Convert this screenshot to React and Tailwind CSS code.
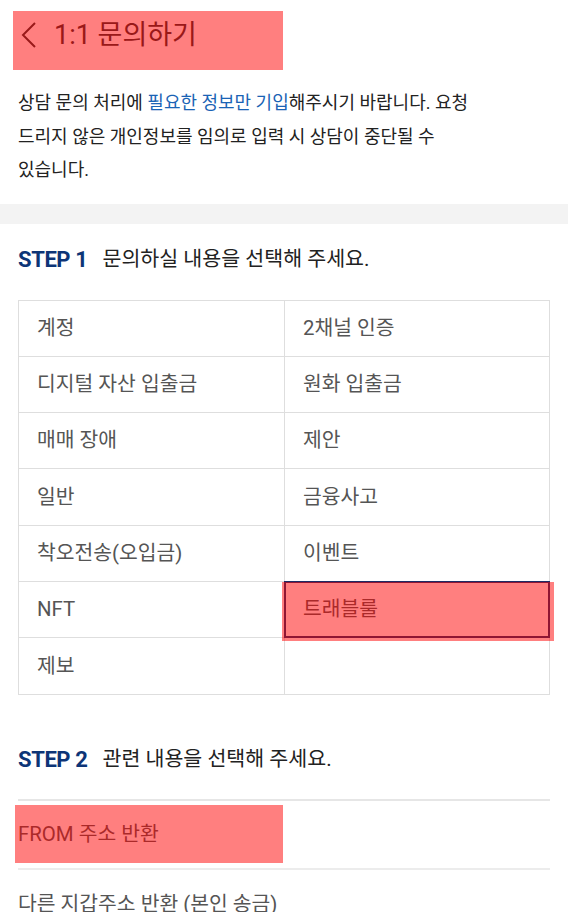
import React from 'react';

const font = { fontFamily: "Roboto, 'Noto Sans CJK KR', sans-serif" };

const categories = [
  ['계정', '2채널 인증'],
  ['디지털 자산 입출금', '원화 입출금'],
  ['매매 장애', '제안'],
  ['일반', '금융사고'],
  ['착오전송(오입금)', '이벤트'],
  ['NFT', '트래블룰'],
  ['제보', ''],
];

const StepTitle = ({ step, text }) => (
  <div className="flex items-center h-[30px] gap-[15px]">
    <span className="text-[22px] font-bold text-[#0d3577] tracking-[-0.4px]">STEP {step}</span>
    <span className="text-[20.6px] text-[#222]">{text}</span>
  </div>
);

// red annotation box laid over the content
const Mark = ({ className }) => (
  <div className={`absolute bg-[#ff0000]/50 pointer-events-none ${className}`} />
);

export default function App() {
  return (
    <div className="w-[568px] h-[912px] overflow-hidden bg-white relative" style={font}>
      <header className="relative h-[80px] flex items-center pl-[18px] gap-[14px] pb-[10px]">
        <svg width="22" height="30" viewBox="0 0 22 30" className="text-[#333]">
          <polyline points="17,3 5,15 17,27" fill="none" stroke="currentColor" strokeWidth="2" />
        </svg>
        <h1 className="text-[27px] text-[#333]">1:1 문의하기</h1>
        <Mark className="left-[13px] top-[11px] w-[270px] h-[59px]" />
      </header>

      <p className="px-[18px] text-[18px] leading-[33.5px] text-[#222] mt-[6px]">
        상담 문의 처리에 <span className="text-[#1a63b5]">필요한 정보만 기입</span>해주시기 바랍니다. 요청
        <br />
        드리지 않은 개인정보를 임의로 입력 시 상담이 중단될 수
        <br />
        있습니다.
      </p>

      <div className="mt-[17px] h-[20px] bg-[#f3f3f3]" />

      <section className="px-[18px] pt-[21px]">
        <StepTitle step={1} text="문의하실 내용을 선택해 주세요." />

        <div className="mt-[25px] grid grid-cols-[265px_1fr] gap-px bg-[#dedede] border border-[#dedede] relative">
          {categories.flat().map((label, i) => {
            const selected = label === '트래블룰';
            return (
              <div
                key={i}
                className={`h-[55.3px] flex items-center pl-[18px] text-[20.4px] text-[#555] bg-white ${
                  selected ? 'outline-2 outline-[#1c2d66] -outline-offset-1 z-10' : ''
                }`}
              >
                {label}
              </div>
            );
          })}
          <Mark className="left-[263px] top-[281px] w-[272px] h-[59px] z-20" />
        </div>
      </section>

      <section className="px-[18px] pt-[50px]">
        <StepTitle step={2} text="관련 내용을 선택해 주세요." />

        <ul className="mt-[24px] border-t-2 border-[#e6e6e6]">
          <li className="relative h-[69px] flex items-center text-[20.4px] text-[#555] border-b-2 border-[#ececec]">
            FROM 주소 반환
            <Mark className="left-[-3px] top-[4px] w-[268px] h-[58px]" />
          </li>
          <li className="h-[69px] flex items-center text-[20.4px] text-[#555]">다른 지갑주소 반환 (본인 송금)</li>
        </ul>
      </section>
    </div>
  );
}
